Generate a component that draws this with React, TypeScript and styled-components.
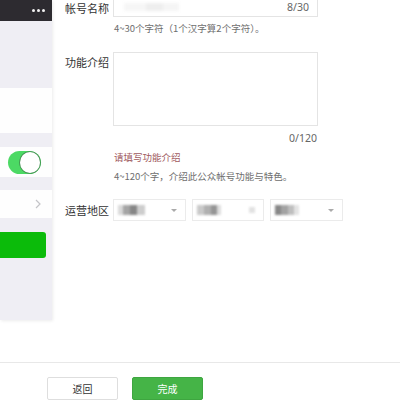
import React from "react";
import styled, { createGlobalStyle } from "styled-components";

const Global = createGlobalStyle`
  html, body { margin: 0; padding: 0; background: #fff; }
  body { font-family: "Noto Sans CJK SC", "Microsoft YaHei", sans-serif; }
  * { box-sizing: border-box; }
`;

const Page = styled.div`
  width: 400px;
  height: 400px;
  overflow: hidden;
  display: flex;
  flex-direction: column;
  background: #fff;
`;

const Main = styled.div`
  display: flex;
  align-items: flex-start;
  height: 362px;
  flex: none;
`;

/* ---------- phone preview ---------- */
const Phone = styled.div`
  width: 52px;
  height: 320px;
  display: flex;
  flex-direction: column;
  background: #efeef4;
  box-shadow: 1px 1px 3px rgba(0, 0, 0, 0.08);
  flex: none;
`;

const TopBar = styled.div`
  height: 21px;
  background: #2d2b30;
  display: flex;
  align-items: center;
  justify-content: flex-end;
  padding-right: 7px;
  gap: 2px;
`;

const Dot = styled.span`
  width: 3px;
  height: 3px;
  border-radius: 50%;
  background: #f2f2f2;
`;

const Block = styled.div<{ $h: number; $white?: boolean }>`
  height: ${(p) => p.$h}px;
  background: ${(p) => (p.$white ? "#fefefe" : "#efeef4")};
  flex: none;
`;

const Cell = styled.div<{ $h: number }>`
  height: ${(p) => p.$h}px;
  background: #fefefe;
  display: flex;
  align-items: center;
  justify-content: flex-end;
  padding-right: 11px;
  flex: none;
`;

const Toggle = styled.div`
  width: 33px;
  height: 23px;
  border-radius: 12px;
  background: #4cd964;
  position: relative;
  &::after {
    content: "";
    position: absolute;
    right: 1px;
    top: 1px;
    width: 20px;
    height: 21px;
    border-radius: 50%;
    background: #fff;
    box-shadow: 0 0 0 0.8px rgba(60, 110, 70, 0.7);
  }
`;

const Rest = styled.div`
  flex: 1;
  padding-top: 14px;
  background: #efeef4;
`;

const PhoneButton = styled.div`
  width: 46px;
  height: 26px;
  background: #0bbb0a;
  border-radius: 0 3px 3px 0;
`;

/* ---------- form ---------- */
const Form = styled.div`
  margin-left: 13px;
  margin-top: -4px;
  width: 260px;
  display: flex;
  flex-direction: column;
`;

const Row = styled.div<{ $mt?: number }>`
  display: flex;
  align-items: flex-start;
  margin-top: ${(p) => p.$mt ?? 0}px;
`;

const Label = styled.div<{ $pt?: number }>`
  width: 48px;
  flex: none;
  font-size: 11px;
  line-height: 14px;
  color: #333;
  padding-top: ${(p) => p.$pt ?? 0}px;
  white-space: nowrap;
`;

const Field = styled.div`
  width: 205px;
  display: flex;
  flex-direction: column;
`;

const Input = styled.div`
  height: 21px;
  border: 1px solid #e4e4e4;
  display: flex;
  align-items: center;
  justify-content: space-between;
  padding: 0 8px 0 10px;
  background: #fff;
`;

const Faint = styled.span`
  width: 55px;
  height: 8px;
  background: linear-gradient(90deg, #f6f6f6 0 40%, #eeeeee 40% 70%, #f5f5f5 70%);
  filter: blur(1.5px);
`;

const Count = styled.span`
  font-size: 10.5px;
  color: #666;
  font-family: "Noto Sans", sans-serif;
`;

const TextArea = styled.div`
  height: 74px;
  border: 1px solid #e4e4e4;
  background: #fff;
`;

const Note = styled.div<{ $mt: number; $tone?: "warn" | "muted"; $right?: boolean }>`
  margin-top: ${(p) => p.$mt}px;
  font-size: 9.5px;
  line-height: 14px;
  white-space: nowrap;
  color: ${(p) => (p.$tone === "warn" ? "#a05a60" : "#6e6e6e")};
  text-align: ${(p) => (p.$right ? "right" : "left")};
  padding-right: ${(p) => (p.$right ? "1px" : "0")};
  padding-left: ${(p) => (p.$right ? "0" : "1px")};
`;

const Selects = styled.div`
  display: flex;
  gap: 6px;
`;

const Select = styled.div<{ $w: number }>`
  width: ${(p) => p.$w}px;
  height: 22px;
  border: 1px solid #ebebeb;
  background: #fff;
  display: flex;
  align-items: center;
  justify-content: space-between;
  padding: 0 8px 0 4px;
`;

/* pixelated placeholder for the region names */
const Mosaic = styled.span<{ $w: number; $stops: string }>`
  width: ${(p) => p.$w}px;
  height: 10px;
  background: linear-gradient(90deg, ${(p) => p.$stops});
  filter: blur(1px);
  opacity: 0.9;
`;

const Caret = styled.span<{ $square?: boolean }>`
  width: 0;
  height: 0;
  border-left: 3px solid transparent;
  border-right: 3px solid transparent;
  border-top: 3px solid #aaa;
  ${(p) =>
    p.$square &&
    `border: none; width: 6px; height: 6px; background: #e2e2e2; filter: blur(0.8px);`}
`;

/* ---------- footer ---------- */
const Footer = styled.div`
  flex: 1;
  border-top: 1px solid #e8e8e8;
  padding: 14px 0 0 47px;
  display: flex;
  gap: 14px;
`;

const Button = styled.div<{ $primary?: boolean }>`
  width: 71px;
  height: 23px;
  border-radius: 2px;
  display: flex;
  align-items: center;
  justify-content: center;
  font-size: 10px;
  color: ${(p) => (p.$primary ? "#fff" : "#333")};
  background: ${(p) => (p.$primary ? "#45b447" : "#fff")};
  border: 1px solid ${(p) => (p.$primary ? "#3ea640" : "#dedede")};
`;

export default function App() {
  return (
    <Page>
      <Global />
      <Main>
        <Phone>
          <TopBar>
            <Dot />
            <Dot />
            <Dot />
          </TopBar>
          <Block $h={67} />
          <Block $h={45} $white />
          <Block $h={14} />
          <Cell $h={30}>
            <Toggle />
          </Cell>
          <Block $h={13} />
          <Cell $h={28}>
            <svg width="6" height="10" viewBox="0 0 6 10">
              <path d="M1 1l4 4-4 4" fill="none" stroke="#c4c4c8" strokeWidth="1.2" />
            </svg>
          </Cell>
          <Rest>
            <PhoneButton />
          </Rest>
        </Phone>

        <Form>
          <Row>
            <Label $pt={5}>帐号名称</Label>
            <Field>
              <Input>
                <Faint />
                <Count>8/30</Count>
              </Input>
              <Note $mt={4}>4~30个字符（1个汉字算2个字符）。</Note>
            </Field>
          </Row>

          <Row $mt={17}>
            <Label $pt={3}>功能介绍</Label>
            <Field>
              <TextArea />
              <Note $mt={5} $right>
                <Count>0/120</Count>
              </Note>
              <Note $mt={5} $tone="warn">请填写功能介绍</Note>
              <Note $mt={5}>4~120个字，介绍此公众帐号功能与特色。</Note>
            </Field>
          </Row>

          <Row $mt={16}>
            <Label $pt={4}>运营地区</Label>
            <Selects>
              <Select $w={73}>
                <Mosaic $w={27} $stops="#d6d6d6 0 20%, #9c9c9c 20% 45%, #7a7a7a 45% 70%, #c8c8c8 70%" />
                <Caret />
              </Select>
              <Select $w={72}>
                <Mosaic $w={24} $stops="#c4c4c4 0 30%, #a8a8a8 30% 60%, #8a8a8a 60% 85%, #dadada 85%" />
                <Caret $square />
              </Select>
              <Select $w={73}>
                <Mosaic $w={24} $stops="#7c7c7c 0 25%, #9a9a9a 25% 55%, #b8b8b8 55% 80%, #e0e0e0 80%" />
                <Caret />
              </Select>
            </Selects>
          </Row>
        </Form>
      </Main>

      <Footer>
        <Button>返回</Button>
        <Button $primary>完成</Button>
      </Footer>
    </Page>
  );
}
